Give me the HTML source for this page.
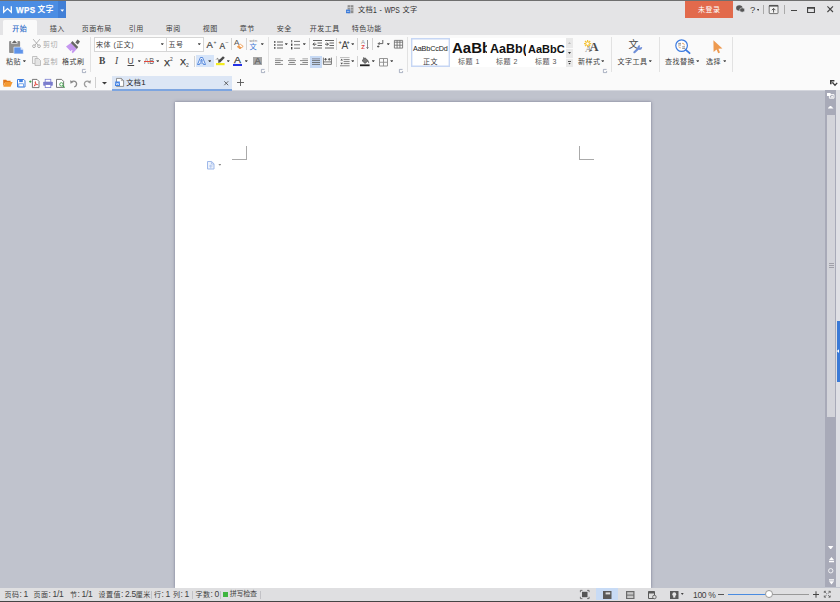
<!DOCTYPE html>
<html lang="zh-CN"><head><meta charset="utf-8"><title>文档1 - WPS 文字</title>
<style>
*{box-sizing:border-box;margin:0;padding:0}
html,body{width:840px;height:602px;overflow:hidden;background:#e4e4e6}
body{position:relative;font-family:"Liberation Sans","Noto Sans CJK SC",sans-serif;font-size:7px;letter-spacing:0.5px;color:#404040;line-height:10px}
.a{position:absolute}
.t{position:absolute;white-space:nowrap;line-height:10px;height:10px}
.g{color:#aaa}
.sep{position:absolute;width:1px;background:#e2e2e2}
.arr{position:absolute;width:0;height:0;border-left:1.9px solid transparent;border-right:1.9px solid transparent;border-top:2.4px solid #383838}
.l{font-size:8.5px;letter-spacing:-0.35px}
svg{position:absolute;overflow:visible}
</style></head><body>
<!-- title bar -->
<div class="a" style="left:0;top:0;width:840px;height:1px;background:#6f6f6f"></div>
<div class="a" style="left:0;top:1px;width:840px;height:17px;background:#e4e4e6"></div>
<div class="a" id="wpsbtn" style="left:0;top:1px;width:66px;height:17px;background:#4b8de3"></div>
<div class="a" style="left:58px;top:1px;width:8px;height:17px;background:#417fd6"></div>
<svg style="left:3px;top:6px" width="9" height="7" viewBox="0 0 9 7"><path d="M0.7 0.3V6.3L4.5 2.6L8.3 6.3V0.3" fill="none" stroke="#fff" stroke-width="1.3"/></svg>
<div class="t" style="left:16px;top:5px;color:#fff;font-size:9.5px;font-weight:bold;-webkit-text-stroke:0.25px #fff;transform:scaleX(.85);transform-origin:0 50%">WPS</div><div class="t" style="left:37.5px;top:5px;color:#fff;font-size:7.7px;font-weight:bold">文字</div>
<div class="a" style="left:60.4px;top:9.4px;width:3.8px;height:2.3px;background:#fff;clip-path:polygon(0 0,100% 0,50% 100%)"></div>
<svg style="left:346px;top:5px" width="8" height="8.5" viewBox="0 0 8 8.5"><path d="M1.6 0.2H7.4V8.2H1.6Z" fill="#8d8d8d"/><path d="M4.4 0.2V8.2M1.6 2.6H7.4M1.6 5H7.4" stroke="#e4e4e6" stroke-width="0.6"/><rect x="0" y="4.6" width="4.2" height="3.6" fill="#3d7bd8"/><path d="M0.8 6.4H3.4" stroke="#e8f0fc" stroke-width="0.6"/></svg>
<div class="t" id="title" style="left:358px;top:4.8px;font-size:7.2px;letter-spacing:0.3px;color:#333">文档</div><div class="t" style="left:373.4px;top:4.6px;font-size:8.6px;letter-spacing:0;word-spacing:1px;color:#333;transform:scaleX(.79);transform-origin:0 50%">1 - WPS</div><div class="t" style="left:402.5px;top:4.8px;font-size:7.2px;letter-spacing:0.3px;color:#333">文字</div>
<div class="a" style="left:685px;top:1px;width:48px;height:17px;background:#e26a4c"></div>
<div class="t" style="left:698px;top:4.9px;color:#fff">未登录</div>
<!-- window icons -->
<svg style="left:736px;top:5px" width="9" height="8" viewBox="0 0 9 8"><ellipse cx="3.3" cy="3" rx="3.2" ry="2.8" fill="#555"/><ellipse cx="6.2" cy="5" rx="2.6" ry="2.2" fill="#555" stroke="#e3e4e8" stroke-width="0.6"/></svg>
<div class="t" style="left:750px;top:4.7px;font-size:9.5px;color:#444">?</div>
<div class="a" style="left:756.8px;top:9px;width:2.7px;height:1.9px;background:#3a3a3a;clip-path:polygon(0 0,100% 0,50% 100%)"></div>
<div class="sep" style="left:762.8px;top:5px;height:9px;background:#aaa"></div>
<svg style="left:769px;top:5px" width="9" height="9" viewBox="0 0 9 9"><rect x="0.2" y="0.4" width="8.8" height="8.2" rx="0.6" fill="#f2f2f2" stroke="#555" stroke-width="0.8"/><rect x="0" y="0" width="9.2" height="1.6" fill="#555"/><path d="M4.6 7.6V3.6M2.8 5.2L4.6 3.4L6.4 5.2" fill="none" stroke="#444" stroke-width="0.9"/></svg>
<div class="sep" style="left:783.6px;top:5px;height:9px;background:#aaa"></div>
<div class="a" style="left:790.6px;top:9.6px;width:6.6px;height:1.2px;background:#444"></div>
<div class="a" style="left:807.3px;top:6.8px;width:7.6px;height:6px;box-shadow:inset 0 0 0 1.1px #444,inset 0 1.7px 0 0 #444"></div>
<svg style="left:826.6px;top:6.4px" width="6.4" height="6.4" viewBox="0 0 6.4 6.4"><path d="M0.4 0.4L6 6M6 0.4L0.4 6" stroke="#444" stroke-width="1.1"/></svg>

<!-- tab row -->
<div class="a" style="left:0;top:18px;width:840px;height:17px;background:#e4e4e6"></div>
<div class="a" style="left:2.6px;top:20px;width:34.6px;height:15px;background:#fafafa;border-radius:1.5px 1.5px 0 0"></div>
<div class="t" style="left:12.2px;top:23.6px;color:#2d6bc8;-webkit-text-stroke:0.15px #2d6bc8">开始</div>
<div class="t" style="left:49.8px;top:23.6px">插入</div>
<div class="t" style="left:81.8px;top:23.6px">页面布局</div>
<div class="t" style="left:128.8px;top:23.6px">引用</div>
<div class="t" style="left:165.8px;top:23.6px">审阅</div>
<div class="t" style="left:202.8px;top:23.6px">视图</div>
<div class="t" style="left:239.8px;top:23.6px">章节</div>
<div class="t" style="left:276.8px;top:23.6px">安全</div>
<div class="t" style="left:309.8px;top:23.6px">开发工具</div>
<div class="t" style="left:351.8px;top:23.6px">特色功能</div>

<!-- ribbon -->
<div class="a" id="ribbon" style="left:0;top:34.6px;width:840px;height:55.4px;background:#fafafa"></div>
<!-- clipboard group -->
<svg style="left:9px;top:40px" width="15" height="15" viewBox="0 0 15 15">
<rect x="0.1" y="1.1" width="11" height="11.9" rx="0.8" fill="#8f8f8f"/>
<rect x="2.2" y="0.9" width="6.3" height="2.7" fill="#fafafa"/>
<path d="M2.9 2.9H8L6.5 1.3Q5.45 -0.3 4.4 1.3Z" fill="#666"/>
<path d="M4.9 7.1H11.6L14.3 9.8V13.9H4.9Z" fill="#5e93ea" stroke="#fafafa" stroke-width="0.6"/>
<path d="M11.6 7.1V9.8H14.3Z" fill="#dfe9fb"/>
</svg>
<div class="t" style="left:6px;top:57px">粘贴</div>
<div class="a" style="left:22.8px;top:60.3px;width:3.2px;height:2.1px;background:#444;clip-path:polygon(0 0,100% 0,50% 100%)"></div>
<svg style="left:32px;top:39px" width="9" height="9" viewBox="0 0 9 9"><path d="M1.2 0.2L6.2 6.3M7.8 0.2L2.8 6.3" stroke="#a8a8a8" stroke-width="0.9" fill="none"/><circle cx="2" cy="7.2" r="1.4" fill="none" stroke="#a8a8a8" stroke-width="0.9"/><circle cx="7" cy="7.2" r="1.4" fill="none" stroke="#a8a8a8" stroke-width="0.9"/></svg>
<div class="t g" style="left:43px;top:40px">剪切</div>
<svg style="left:32px;top:56px" width="9" height="10" viewBox="0 0 9 10"><path d="M0.5 0.5H5V7.5H0.5Z" fill="#f2f2f2" stroke="#b5b5b5" stroke-width="0.8"/><path d="M3 2.5H6.5L8.5 4.5V9.5H3Z" fill="#e4e4e4" stroke="#b5b5b5" stroke-width="0.8"/></svg>
<div class="t g" style="left:43px;top:57px">复制</div>
<svg style="left:66px;top:39px" width="15" height="15" viewBox="0 0 15 15">
<path d="M0 7.4L4.8 3.9L10.8 10L6.8 14.2L5.6 13L6.6 11.6L5.8 11L4.6 12.2Z" fill="#c597f0"/>
<path d="M4.8 3.9L6.4 2.1L12.2 7.9L10.8 10Z" fill="#666"/>
<path d="M9.3 3.4L11.5 0.5L14 2.5L11.9 5.6Z" fill="#666"/>
</svg>
<div class="t" style="left:62px;top:57px">格式刷</div>
<svg class="lau" style="left:82px;top:69.2px" width="4" height="4" viewBox="0 0 4 4"><path d="M3.6 0.4H0.4V3.6H3.6V2" fill="none" stroke="#8c96ad" stroke-width="0.7"/></svg>
<div class="sep" style="left:90px;top:37px;height:35px"></div>

<!-- font group -->
<div class="a" style="left:93.5px;top:37px;width:73px;height:15px;background:#fff;border:1px solid #d6d6d6"></div>
<div class="a" style="left:165.5px;top:37px;width:38.5px;height:15px;background:#fff;border:1px solid #d6d6d6"></div>
<div class="t" style="left:96px;top:40px">宋体 (正文)</div>
<div class="a" style="left:160.7px;top:43.3px;width:3.2px;height:2.1px;background:#444;clip-path:polygon(0 0,100% 0,50% 100%)"></div>
<div class="t" style="left:168.5px;top:40px">五号</div>
<div class="a" style="left:197.7px;top:43.3px;width:3.2px;height:2.1px;background:#444;clip-path:polygon(0 0,100% 0,50% 100%)"></div>
<div class="t" style="left:206.5px;top:40px;font-size:9.5px;color:#3c3c3c;-webkit-text-stroke:0.2px #3c3c3c">A</div>
<div class="t" style="left:213.5px;top:36.5px;font-size:5px;color:#444">+</div>
<div class="t" style="left:219.5px;top:40.5px;font-size:8.5px;color:#3c3c3c;-webkit-text-stroke:0.2px #3c3c3c">A</div>
<div class="t" style="left:225.5px;top:36.5px;font-size:5px;color:#444">–</div>
<div class="sep" style="left:230.5px;top:38px;height:12px;background:#d3d3d3"></div>
<div class="t" style="left:234px;top:38px;font-size:8px;color:#555">A</div>
<svg style="left:237px;top:43.5px" width="6.5" height="5" viewBox="0 0 6.5 5"><path d="M0.3 2.8L3.4 0.3L6.2 2.4L3 4.8Z" fill="#fff" stroke="#ee9a4d" stroke-width="0.9"/><path d="M0.3 2.8L1.8 1.6L4.6 3.6L3 4.8Z" fill="#ee9a4d"/></svg>
<div class="sep" style="left:245.5px;top:38px;height:12px;background:#d3d3d3"></div>
<div class="t" style="left:249.5px;top:41.5px;font-size:7.2px;color:#3e78d6">文</div>
<div class="t" style="left:249.5px;top:35.5px;font-size:4px;color:#777;letter-spacing:0.2px">wén</div>
<div class="a" style="left:260.7px;top:43.3px;width:3.2px;height:2.1px;background:#444;clip-path:polygon(0 0,100% 0,50% 100%)"></div>

<div class="t" style="left:99px;top:56px;font-family:'Liberation Serif',serif;font-weight:bold;font-size:9.5px;color:#444">B</div>
<div class="t" style="left:115px;top:56px;font-family:'Liberation Serif',serif;font-style:italic;font-size:9.5px;color:#444">I</div>
<div class="t" style="left:127.5px;top:55.5px;font-size:8.5px;color:#444;text-decoration:underline;text-decoration-thickness:0.7px;text-underline-offset:0.6px">U</div>
<div class="a" style="left:137.7px;top:60.3px;width:3.2px;height:2.1px;background:#444;clip-path:polygon(0 0,100% 0,50% 100%)"></div>
<div class="t" style="left:144px;top:56.3px;font-size:9px;color:#6a6a6a;transform:scaleX(.8);transform-origin:0 50%">AB</div>
<div class="a" style="left:143.5px;top:60.5px;width:10.5px;height:1px;background:#e0473e"></div>
<div class="a" style="left:156.2px;top:60.3px;width:3.2px;height:2.1px;background:#444;clip-path:polygon(0 0,100% 0,50% 100%)"></div>
<div class="t" style="left:164px;top:57.5px;font-size:9px;color:#333;-webkit-text-stroke:0.25px #333">X</div>
<div class="t" style="left:170px;top:53.5px;font-size:5px;color:#444">2</div>
<div class="t" style="left:180px;top:57px;font-size:9px;color:#333;-webkit-text-stroke:0.25px #333">X</div>
<div class="t" style="left:186px;top:60px;font-size:5px;color:#444">2</div>
<div class="sep" style="left:194px;top:56px;height:11px;background:#d3d3d3"></div>
<div class="a" style="left:196.2px;top:55px;width:17.6px;height:11.8px;background:#d6e4f8"></div>
<svg style="left:197.3px;top:56.8px" width="9" height="8" viewBox="0 0 9 8"><path d="M0.5 7.5L3.4 0.5H5.6L8.5 7.5H6.5L5.9 5.9H3.1L2.5 7.5Z M3.6 4.3H5.4L4.5 2Z" fill="#f4f8fe" stroke="#3f78d8" stroke-width="0.85" stroke-linejoin="round"/></svg>
<div class="a" style="left:208.2px;top:60.3px;width:3.2px;height:2.1px;background:#444;clip-path:polygon(0 0,100% 0,50% 100%)"></div>
<svg style="left:215.5px;top:56px" width="9" height="10" viewBox="0 0 9 10"><rect x="0" y="7" width="8.6" height="2.2" fill="#f3ec1f"/><path d="M7 0.2L8.8 1.8L4.2 6.4L2 6.8L2.6 4.6Z" fill="#4a4a4a"/><path d="M0.2 3.4C1.2 2 2.4 2.2 2.1 3.6C1.9 4.8 3 4.6 3.8 3.6" stroke="#555" stroke-width="0.8" fill="none"/></svg>
<div class="a" style="left:226.7px;top:60.3px;width:3.2px;height:2.1px;background:#444;clip-path:polygon(0 0,100% 0,50% 100%)"></div>
<div class="t" style="left:233.6px;top:54.6px;font-size:9.5px;color:#3c3c3c;-webkit-text-stroke:0.25px #3c3c3c;transform:scaleX(1.1);transform-origin:0 50%">A</div>
<div class="a" style="left:233px;top:63.5px;width:9px;height:2px;background:#2432e6"></div>
<div class="a" style="left:244.7px;top:60.3px;width:3.2px;height:2.1px;background:#444;clip-path:polygon(0 0,100% 0,50% 100%)"></div>
<div class="a" style="left:253.3px;top:57px;width:8.8px;height:8.3px;background:#a6a6a6"></div>
<div class="t" style="left:254.4px;top:56.4px;font-size:9.5px;color:#646464;-webkit-text-stroke:0.2px #646464">A</div>
<svg class="lau" style="left:260.5px;top:69.2px" width="4" height="4" viewBox="0 0 4 4"><path d="M3.6 0.4H0.4V3.6H3.6V2" fill="none" stroke="#8c96ad" stroke-width="0.7"/></svg>
<div class="sep" style="left:268px;top:37px;height:35px"></div>
<!-- paragraph group -->
<svg style="left:273.5px;top:40.5px" width="9" height="8" viewBox="0 0 9 8"><g fill="#444"><rect x="0" y="0.2" width="1.5" height="1.5"/><rect x="0" y="3.2" width="1.5" height="1.5"/><rect x="0" y="6.2" width="1.5" height="1.5"/></g><g stroke="#555" stroke-width="0.9"><path d="M3 1H9M3 4H9M3 7H9"/></g></svg>
<div class="a" style="left:284.7px;top:43.3px;width:3.2px;height:2.1px;background:#444;clip-path:polygon(0 0,100% 0,50% 100%)"></div>
<svg style="left:291px;top:39.5px" width="9" height="10" viewBox="0 0 9 10"><g fill="#444"><rect x="0.3" y="0" width="0.9" height="2.4"/><rect x="0" y="3.6" width="1.4" height="2.2"/><rect x="0" y="7" width="1.4" height="2.4"/></g><g stroke="#666" stroke-width="0.9"><path d="M3 1.4H9M3 4.8H9M3 8.2H9"/></g></svg>
<div class="a" style="left:302.7px;top:43.3px;width:3.2px;height:2.1px;background:#444;clip-path:polygon(0 0,100% 0,50% 100%)"></div>
<div class="sep" style="left:309px;top:38px;height:12px;background:#d3d3d3"></div>
<svg style="left:313px;top:40px" width="9" height="8.5" viewBox="0 0 9 8.5"><g stroke="#555" stroke-width="0.9"><path d="M0 0.5H9M4.5 3H9M4.5 5.5H9M0 8H9"/></g><path d="M0 4.2H3.4M1.6 2.6L0 4.2L1.6 5.8" stroke="#444" stroke-width="0.9" fill="none"/></svg>
<svg style="left:325px;top:40px" width="9" height="8.5" viewBox="0 0 9 8.5"><g stroke="#555" stroke-width="0.9"><path d="M0 0.5H9M4.5 3H9M4.5 5.5H9M0 8H9"/></g><path d="M0 4.2H3.4M1.8 2.6L3.4 4.2L1.8 5.8" stroke="#444" stroke-width="0.9" fill="none"/></svg>
<div class="sep" style="left:336px;top:38px;height:12px;background:#d3d3d3"></div>
<div class="t" style="left:341.5px;top:40.5px;font-size:10px;color:#444">A</div>
<div class="t" style="left:338.5px;top:37px;font-size:5.5px;color:#444;font-weight:bold">+</div>
<div class="t" style="left:346.5px;top:37px;font-size:5.5px;color:#444;font-weight:bold">+</div>
<div class="a" style="left:351.2px;top:43.3px;width:3.2px;height:2.1px;background:#444;clip-path:polygon(0 0,100% 0,50% 100%)"></div>
<div class="sep" style="left:357px;top:38px;height:12px;background:#d3d3d3"></div>
<div class="t" style="left:361px;top:37px;font-size:6px;color:#999">A</div>
<div class="t" style="left:361.2px;top:42.2px;font-size:6px;color:#e04848;font-weight:bold">Z</div>
<svg style="left:366.4px;top:40px" width="3" height="9" viewBox="0 0 3 9"><path d="M1.5 0V8.6M0.5 7.2L1.5 8.6L2.5 7.2" stroke="#666" stroke-width="0.75" fill="none"/></svg>
<div class="sep" style="left:371.5px;top:38px;height:12px;background:#d3d3d3"></div>
<svg style="left:377px;top:40px" width="7" height="8" viewBox="0 0 7 8"><path d="M5.8 0V3.6H1.2M2.6 2.2L1.2 3.6L2.6 5" stroke="#555" stroke-width="0.9" fill="none"/><path d="M0 6.5H2.4M1.2 5.4V7.6" stroke="#444" stroke-width="0.8"/></svg>
<div class="a" style="left:386.7px;top:43.3px;width:3.2px;height:2.1px;background:#444;clip-path:polygon(0 0,100% 0,50% 100%)"></div>
<svg style="left:394px;top:40px" width="9" height="8.5" viewBox="0 0 9 8.5"><path d="M0.4 0.4H8.6V8.1H0.4ZM0.4 2.2H8.6M0.4 5.2H8.6M3.1 0.4V8.1M5.9 0.4V8.1" fill="none" stroke="#666" stroke-width="0.8"/></svg>

<svg style="left:275px;top:58px" width="8" height="7" viewBox="0 0 8 7"><path d="M0 0.8H5.6" stroke="#bdbdbd" stroke-width="1.4"/><path d="M0 2.6H8M0 4.5H5.6M0 6.4H8" stroke="#6a6a6a" stroke-width="0.8"/></svg>
<svg style="left:287.5px;top:58px" width="8" height="7" viewBox="0 0 8 7"><path d="M1.2 0.8H6.8" stroke="#bdbdbd" stroke-width="1.4"/><path d="M0 2.6H8M1.2 4.5H6.8M0 6.4H8" stroke="#6a6a6a" stroke-width="0.8"/></svg>
<svg style="left:300px;top:58px" width="8" height="7" viewBox="0 0 8 7"><path d="M2.4 0.8H8" stroke="#bdbdbd" stroke-width="1.4"/><path d="M0 2.6H8M2.4 4.5H8M0 6.4H8" stroke="#6a6a6a" stroke-width="0.8"/></svg>
<div class="a" style="left:310px;top:55.7px;width:11.9px;height:12.3px;background:#c7daf5"></div>
<svg style="left:312px;top:58px" width="8" height="7" viewBox="0 0 8 7"><path d="M0 0.8H8" stroke="#9aa3b5" stroke-width="1.4"/><path d="M0 2.6H8M0 4.5H8M0 6.4H8" stroke="#5a5a5a" stroke-width="0.8"/></svg>
<svg style="left:323.3px;top:57.4px" width="8.8" height="8" viewBox="0 0 8.8 8"><path d="M0.4 0.6V7.4H8.4V0.6M0.4 4.9H8.4" fill="none" stroke="#555" stroke-width="0.8"/><path d="M1.2 2.3H3.9M2.55 1V3.6M4.9 2.3H7.6M6.25 1V3.6" stroke="#444" stroke-width="0.8"/></svg>
<div class="sep" style="left:336px;top:56px;height:11px;background:#d3d3d3"></div>
<svg style="left:340px;top:56.8px" width="9.6" height="9.4" viewBox="0 0 9.6 9.4"><path d="M0 0.6H9.6" stroke="#bbb" stroke-width="1"/><path d="M3.6 2.6H9.6M3.6 4.6H9.6M3.6 6.6H9.6M0 8.8H9.6" stroke="#666" stroke-width="0.8"/><path d="M0.4 3.4L1.7 1.8L3 3.4ZM0.4 5.8L1.7 7.4L3 5.8Z" fill="#444"/></svg>
<div class="a" style="left:351.2px;top:60.3px;width:3.2px;height:2.1px;background:#444;clip-path:polygon(0 0,100% 0,50% 100%)"></div>
<div class="sep" style="left:357px;top:56px;height:11px;background:#d3d3d3"></div>
<svg style="left:360px;top:56.5px" width="10" height="9.5" viewBox="0 0 10 9.5"><rect x="0" y="7.4" width="9.6" height="1.8" fill="#222"/><path d="M2 3.6L5 0.8L8.2 3.8L5 6.4Z" fill="#777" stroke="#444" stroke-width="0.7"/><path d="M3.6 2V0.2" stroke="#444" stroke-width="0.7"/><path d="M8.2 3.8C9 4.6 9.4 5.4 9 6.2C8.4 6.4 8 5.6 8.2 3.8Z" fill="#555"/></svg>
<div class="a" style="left:371.7px;top:60.3px;width:3.2px;height:2.1px;background:#444;clip-path:polygon(0 0,100% 0,50% 100%)"></div>
<svg style="left:378.5px;top:57.5px" width="9" height="8.5" viewBox="0 0 9 8.5"><path d="M0.5 0.5H8.5V8H0.5ZM4.5 0.5V8M0.5 4.25H8.5" fill="none" stroke="#8a8a8a" stroke-width="0.9"/></svg>
<div class="a" style="left:390.2px;top:60.3px;width:3.2px;height:2.1px;background:#444;clip-path:polygon(0 0,100% 0,50% 100%)"></div>
<svg class="lau" style="left:399px;top:69.2px" width="4" height="4" viewBox="0 0 4 4"><path d="M3.6 0.4H0.4V3.6H3.6V2" fill="none" stroke="#8c96ad" stroke-width="0.7"/></svg>
<div class="sep" style="left:406.8px;top:37px;height:35px"></div>

<!-- styles gallery -->
<div class="a" style="left:411px;top:37.6px;width:155px;height:29.7px;background:#fff"></div>
<div class="a" style="left:411px;top:37.6px;width:38.5px;height:29.7px;box-shadow:inset 0 0 0 1.4px #c6d6f4"></div>
<div class="t" style="left:413px;top:43.5px;font-size:7.2px;color:#222;letter-spacing:-0.1px">AaBbCcDd</div>
<div class="t" style="left:423px;top:57px">正文</div>
<div class="a" style="left:450px;top:38px;width:37px;height:18px;overflow:hidden"><div class="t" style="left:2px;top:3px;font-size:15px;font-weight:bold;letter-spacing:0;color:#111;line-height:14px;height:14px">AaBb</div></div>
<div class="t" style="left:458px;top:57px;color:#555">标题 1</div>
<div class="a" style="left:488px;top:38px;width:38px;height:18px;overflow:hidden"><div class="t" style="left:2px;top:3.5px;font-size:12.5px;font-weight:bold;letter-spacing:0;color:#111;line-height:14px;height:14px">AaBb(</div></div>
<div class="t" style="left:496px;top:57px;color:#555">标题 2</div>
<div class="a" style="left:526.5px;top:38px;width:38px;height:18px;overflow:hidden"><div class="t" style="left:1.5px;top:4px;font-size:11px;font-weight:bold;letter-spacing:0;color:#111;line-height:14px;height:14px">AaBbC</div></div>
<div class="t" style="left:535px;top:57px;color:#555">标题 3</div>
<div class="a" style="left:566px;top:37.6px;width:7px;height:29.7px;background:#e9e9e9"></div>
<div class="a" style="left:566px;top:47.5px;width:7px;height:1px;background:#fafafa"></div>
<div class="a" style="left:566px;top:57.5px;width:7px;height:1px;background:#fafafa"></div>
<div class="a" style="left:568px;top:42px;width:3px;height:2px;background:#bbb;clip-path:polygon(50% 0,100% 100%,0 100%)"></div>
<div class="a" style="left:568px;top:52px;width:3px;height:2px;background:#3a3a3a;clip-path:polygon(0 0,100% 0,50% 100%)"></div>
<div class="a" style="left:568px;top:60.5px;width:3px;height:0.8px;background:#555"></div>
<div class="a" style="left:568px;top:62.5px;width:3px;height:2px;background:#3a3a3a;clip-path:polygon(0 0,100% 0,50% 100%)"></div>

<!-- new style -->
<svg style="left:583px;top:39px" width="16" height="14" viewBox="0 0 16 14"><g stroke="#f4c232" stroke-width="1.2"><path d="M4.6 1V8.2M1 4.6H8.2M2 2L7.2 7.2M7.2 2L2 7.2"/></g><circle cx="4.6" cy="4.6" r="1.7" fill="#fff" stroke="#f4c232" stroke-width="0.7"/></svg>
<div class="t" style="left:585.5px;top:43.5px;font-family:'Liberation Serif',serif;font-size:8.5px;color:#888;font-style:italic">A</div>
<div class="t" style="left:589.5px;top:40.5px;font-family:'Liberation Serif',serif;font-size:12.5px;font-weight:bold;color:#4a4a4a;line-height:12px;height:12px">A</div>
<div class="t" style="left:578px;top:57px">新样式</div>
<div class="a" style="left:601.2px;top:60.3px;width:3.2px;height:2.1px;background:#444;clip-path:polygon(0 0,100% 0,50% 100%)"></div>
<svg class="lau" style="left:603px;top:69.2px" width="4" height="4" viewBox="0 0 4 4"><path d="M3.6 0.4H0.4V3.6H3.6V2" fill="none" stroke="#8c96ad" stroke-width="0.7"/></svg>
<div class="sep" style="left:611px;top:37px;height:35px"></div>
<!-- text tools -->
<div class="t" style="left:628.6px;top:38.7px;font-size:10px;color:#4a4a4a;line-height:12px;height:12px">文</div>
<svg style="left:633px;top:44.5px" width="10" height="8.5" viewBox="0 0 10 8.5"><path d="M1.4 7.2L5.6 3.2" stroke="#6f8fd8" stroke-width="2.2" stroke-linecap="round"/><circle cx="6.8" cy="2.6" r="2.3" fill="#6f8fd8"/><path d="M6.6 2.8L7.2 -0.4L10.2 1.6Z" fill="#fafafa"/></svg>
<div class="t" style="left:617.5px;top:57px">文字工具</div>
<div class="a" style="left:648.7px;top:60.3px;width:3.2px;height:2.1px;background:#444;clip-path:polygon(0 0,100% 0,50% 100%)"></div>
<div class="sep" style="left:658.5px;top:37px;height:35px"></div>
<!-- find replace -->
<svg style="left:674.5px;top:39px" width="16" height="15" viewBox="0 0 16 15"><circle cx="6.6" cy="6.6" r="5.8" fill="#fff" stroke="#3c7be0" stroke-width="1.2"/><path d="M10.8 10.8L14.6 14.2" stroke="#3c7be0" stroke-width="1.8" stroke-linecap="round"/><g stroke="#777" stroke-width="0.8"><path d="M3.2 4.4H6M3.2 6H6"/><path d="M7.2 7.8H10M7.2 9.4H10"/></g><path d="M7 4.4C8.6 4 9.4 4.8 9.2 6.4M5.8 8.8C4.4 9 3.8 8.4 3.8 7.4" fill="none" stroke="#e89a4a" stroke-width="0.8"/></svg>
<div class="t" style="left:665px;top:57px">查找替换</div>
<div class="a" style="left:696.2px;top:60.3px;width:3.2px;height:2.1px;background:#444;clip-path:polygon(0 0,100% 0,50% 100%)"></div>
<svg style="left:713px;top:40px" width="10" height="13.5" viewBox="0 0 10 13.5"><path d="M0.4 0.2L9.4 8.6L5.4 8.8L7 12.6L5.2 13.2L3.6 9.6L0.6 12Z" fill="#ee9a50"/></svg>
<div class="t" style="left:706px;top:57px">选择</div>
<div class="a" style="left:723.2px;top:60.3px;width:3.2px;height:2.1px;background:#444;clip-path:polygon(0 0,100% 0,50% 100%)"></div>
<div class="sep" style="left:732px;top:37px;height:35px"></div>
<!-- QAT row -->
<svg style="left:3px;top:79px" width="10" height="8" viewBox="0 0 10 8"><path d="M0.2 7.6V0.8H3.2L4 1.8H7.6V3H2.2Z" fill="#e0771a"/><path d="M0.4 7.8L2.2 3H9.6L7.6 7.8Z" fill="#f59a32"/></svg>
<svg style="left:17px;top:78.5px" width="8.5" height="8.5" viewBox="0 0 8.5 8.5"><path d="M0.5 0.5H6.8L8 1.8V8H0.5Z" fill="#fff" stroke="#3f7fe0" stroke-width="1"/><rect x="2.2" y="0.5" width="3.6" height="2.6" fill="#3f7fe0"/><rect x="1.8" y="4.8" width="4.8" height="3" fill="#fff" stroke="#3f7fe0" stroke-width="0.7"/></svg>
<svg style="left:29px;top:78.5px" width="10.5" height="9" viewBox="0 0 10.5 9"><path d="M3.4 0.4H8L10 2.4V8.6H3.4Z" fill="#fff" stroke="#555" stroke-width="0.8"/><path d="M5.2 7.2C6.4 5 6.8 3.4 6.4 2.6C5.6 3.2 6.6 5.4 8.6 5.6C7 5.4 5.6 6.2 5.2 7.2Z" fill="none" stroke="#e0352b" stroke-width="0.8"/><path d="M0.2 2.6H2.4M1.3 1.5V3.7" stroke="#3aa046" stroke-width="1"/></svg>
<svg style="left:42.5px;top:78.5px" width="10" height="9" viewBox="0 0 10 9"><rect x="2.2" y="0.3" width="5.6" height="3" fill="#fff" stroke="#7a7ccd" stroke-width="0.8"/><rect x="0.2" y="2.8" width="9.6" height="4" rx="0.8" fill="#7a7ccd"/><rect x="2.2" y="5.6" width="5.6" height="3" fill="#fff" stroke="#7a7ccd" stroke-width="0.8"/></svg>
<svg style="left:56px;top:78.5px" width="9.5" height="9" viewBox="0 0 9.5 9"><path d="M0.5 0.4H5.6L7.6 2.4V8.4H0.5Z" fill="#fff" stroke="#555" stroke-width="0.8"/><circle cx="5.4" cy="5.4" r="1.7" fill="#fff" stroke="#3aa046" stroke-width="0.9"/><path d="M6.6 6.6L8.6 8.6" stroke="#3aa046" stroke-width="1.1"/></svg>
<svg style="left:70px;top:78.5px" width="8" height="8.5" viewBox="0 0 8 8.5"><path d="M1.4 2.6C4 1.4 6.6 2.4 6.6 4.8C6.6 6.6 5.6 7.6 4.2 8" fill="none" stroke="#8a8a8a" stroke-width="1.3"/><path d="M0 1.2L0.6 4.8L3.6 3Z" fill="#8a8a8a"/></svg>
<svg style="left:83px;top:78.5px" width="8" height="8.5" viewBox="0 0 8 8.5"><path d="M6.6 2.6C4 1.4 1.4 2.4 1.4 4.8C1.4 6.6 2.4 7.6 3.8 8" fill="none" stroke="#9c9c9c" stroke-width="1.3"/><path d="M8 1.2L7.4 4.8L4.4 3Z" fill="#9c9c9c"/></svg>
<div class="sep" style="left:95px;top:77px;height:11px;background:#d0d0d0"></div>
<div class="a" style="left:101.5px;top:81.5px;width:6px;height:3px;background:#3a3a3a;clip-path:polygon(0 0,100% 0,50% 100%)"></div>
<div class="a" style="left:112px;top:75.6px;width:120px;height:14px;background:#dce6f5"></div><div class="a" style="left:112px;top:89.1px;width:120px;height:1.7px;background:#7da5e0;z-index:2"></div>
<svg style="left:115px;top:78px" width="9" height="8.8" viewBox="0 0 9 8.8"><path d="M1.5 0.4H6.4L8.6 2.6V8.4H1.5Z" fill="#fff" stroke="#7a7a7a" stroke-width="0.8"/><path d="M6.4 0.4V2.6H8.6" fill="none" stroke="#7a7a7a" stroke-width="0.6"/><rect x="0" y="3.6" width="5" height="4.3" rx="0.5" fill="#3f80e4"/><path d="M0.9 4.6L1.7 7L2.5 5.2L3.3 7L4.1 4.6" stroke="#fff" stroke-width="0.6" fill="none"/></svg>
<div class="t" style="left:126.3px;top:77.6px;color:#222">文档<span class="l" style="font-size:8px">1</span></div>
<svg style="left:224px;top:81px" width="4.5" height="4.5" viewBox="0 0 4.5 4.5"><path d="M0.3 0.3L4.2 4.2M4.2 0.3L0.3 4.2" stroke="#444" stroke-width="0.8"/></svg>
<svg style="left:236.5px;top:79px" width="7" height="7" viewBox="0 0 7 7"><path d="M3.5 0V7M0 3.5H7" stroke="#555" stroke-width="0.9"/></svg>
<svg style="left:829.8px;top:79.8px" width="8" height="6.5" viewBox="0 0 8 6.5"><path d="M0 0H4.4V1.5H0Z M0 1.5H1.6V4.2H0Z M2 2.2H3.4V3.2H2Z" fill="#3a3a3a"/><path d="M2.8 2.9L5 5.2L7.2 2.9" stroke="#3a3a3a" stroke-width="1.3" fill="none"/></svg>


<!-- doc area -->
<div class="a" id="docbg" style="left:0;top:90.4px;width:840px;height:498px;background:#c0c3cd"></div>
<div class="a" style="left:0;top:89.6px;width:840px;height:1.2px;background:#d4d6dd"></div>
<div class="a" id="page" style="left:174.7px;top:102.2px;width:476.3px;height:486px;background:#fff;box-shadow:0 0 1px #9c9fb0,0 0 3px rgba(100,102,128,.75)"></div>
<div class="a" style="left:232px;top:159px;width:15px;height:0.9px;background:#aaa"></div>
<div class="a" style="left:246px;top:145.5px;width:0.9px;height:14.5px;background:#aaa"></div>
<div class="a" style="left:579px;top:159px;width:14.5px;height:0.9px;background:#aaa"></div>
<div class="a" style="left:579px;top:145.5px;width:0.9px;height:14.5px;background:#aaa"></div>
<svg style="left:207px;top:161px" width="7.5" height="8.5" viewBox="0 0 7.5 8.5"><path d="M0.5 0.5H4.6L7 2.8V8H0.5Z" fill="#eef3fc" stroke="#9fb9ea" stroke-width="1"/><path d="M4.4 0.6V3H7" fill="none" stroke="#9fb9ea" stroke-width="0.8"/><path d="M2 5H5.6M3.8 3.6V7.4" stroke="#9fb9ea" stroke-width="0.7"/></svg>
<div class="a" style="left:218.3px;top:164px;width:3.2px;height:1.8px;background:#8a8a8a;clip-path:polygon(0 0,100% 0,50% 100%)"></div>
<!-- scrollbar -->
<div class="a" style="left:825px;top:90px;width:11px;height:497px;background:#a8aab8"></div>
<div class="a" style="left:836px;top:90px;width:4px;height:497px;background:#dfe0e5"></div>
<div class="a" style="left:827px;top:114.5px;width:8px;height:302.5px;background:#d3d4da"></div>
<div class="a" style="left:829px;top:263px;width:4.5px;height:0.8px;background:#a0a0a8"></div>
<div class="a" style="left:829px;top:265px;width:4.5px;height:0.8px;background:#a0a0a8"></div>
<div class="a" style="left:829px;top:267px;width:4.5px;height:0.8px;background:#a0a0a8"></div>
<div class="a" style="left:836.5px;top:320.5px;width:3.5px;height:61.5px;background:#3b7ad6"></div>
<div class="a" style="left:836.8px;top:349.3px;width:2.2px;height:3.6px;background:#fff;clip-path:polygon(100% 0,100% 100%,0 50%)"></div>
<svg style="left:827px;top:93px" width="7.5" height="5.5" viewBox="0 0 7.5 5.5"><rect x="0" y="0" width="3.6" height="3" fill="#fff"/><path d="M2.4 1.6H7V5.2H2.4Z" fill="none" stroke="#fff" stroke-width="0.9"/><path d="M3.4 4.6L5.2 2.6L6.6 4.6Z" fill="#fff"/></svg>
<div class="a" style="left:827.5px;top:105.5px;width:6px;height:3px;background:#fff;clip-path:polygon(50% 0,100% 100%,0 100%)"></div>
<div class="a" style="left:827.8px;top:545.7px;width:5.8px;height:3.8px;background:#fff;clip-path:polygon(0 0,100% 0,50% 100%)"></div>
<svg style="left:828.5px;top:556.5px" width="5" height="5.5" viewBox="0 0 5 5.5"><path d="M0 3L2.5 0L5 3Z M0 3.8H5V5.2H0Z" fill="#fff"/></svg>
<svg style="left:828px;top:568px" width="5.5" height="5.5" viewBox="0 0 5.5 5.5"><circle cx="2.75" cy="2.75" r="2.2" fill="none" stroke="#fff" stroke-width="0.8"/></svg>
<svg style="left:828.5px;top:579px" width="5" height="5.5" viewBox="0 0 5 5.5"><path d="M0 0.2H5V1.5H0Z M0 2.2L2.5 5.4L5 2.2Z" fill="#fff"/></svg>


<!-- status bar -->
<div class="a" id="status" style="left:0;top:587.5px;width:840px;height:13.3px;background:#dfdfe1"></div>
<div class="a" style="left:0;top:600.7px;width:840px;height:2px;background:#454545"></div>
<div class="t" style="left:4.5px;top:589.4px">页码<span class="l">: 1</span></div>
<div class="t" style="left:33.5px;top:589.4px">页面<span class="l">: 1/1</span></div>
<div class="t" style="left:70px;top:589.4px">节<span class="l">: 1/1</span></div>
<div class="t" style="left:98.5px;top:589.4px">设置值<span class="l">: 2.5</span>厘米</div>
<div class="sep" style="left:150.5px;top:591px;height:7.5px;background:#c2c2c6"></div>
<div class="t" style="left:154px;top:589.4px">行<span class="l">: 1</span></div>
<div class="t" style="left:173px;top:589.4px">列<span class="l">: 1</span></div>
<div class="sep" style="left:191.5px;top:591px;height:7.5px;background:#c2c2c6"></div>
<div class="t" style="left:195.5px;top:589.4px">字数<span class="l">: 0</span></div>
<div class="sep" style="left:220px;top:591px;height:7.5px;background:#c2c2c6"></div>
<div class="a" style="left:223px;top:592px;width:4.5px;height:5px;background:#3fb53f"></div>
<div class="t" style="left:229.7px;top:589.4px;letter-spacing:-0.2px">拼写检查</div>
<div class="sep" style="left:260px;top:591px;height:7.5px;background:#c2c2c6"></div>
<svg style="left:580px;top:590px" width="9.5" height="9" viewBox="0 0 9.5 9"><rect x="2" y="1.8" width="5.5" height="5.4" fill="#555"/><path d="M0.4 2.2V0.4H2.4M7.1 0.4H9.1V2.2M9.1 6.8V8.6H7.1M2.4 8.6H0.4V6.8" fill="none" stroke="#555" stroke-width="0.8"/></svg>
<div class="a" style="left:596px;top:588px;width:22px;height:12px;background:#c8dbf5"></div>
<svg style="left:603px;top:590.5px" width="8.5" height="8" viewBox="0 0 8.5 8"><rect x="0" y="0" width="8.5" height="8" fill="#5a5a5a"/><rect x="2.6" y="1.4" width="4.6" height="2" fill="#ddd"/></svg>
<svg style="left:625.5px;top:590.5px" width="8.5" height="8" viewBox="0 0 8.5 8"><rect x="0" y="0" width="8.5" height="8" fill="#6a6a6a"/><rect x="1.2" y="1.2" width="6.1" height="2.4" fill="#c8c8c8"/><rect x="1.2" y="4.6" width="6.1" height="2.4" fill="#c8c8c8"/></svg>
<svg style="left:648px;top:590.5px" width="9" height="8.5" viewBox="0 0 9 8.5"><path d="M0.5 0.5H6.5V7.5H0.5Z" fill="#ddd" stroke="#5a5a5a" stroke-width="1"/><rect x="0.5" y="0.5" width="6" height="2" fill="#5a5a5a"/><circle cx="6.4" cy="6" r="1.8" fill="#ddd" stroke="#5a5a5a" stroke-width="0.8"/></svg>
<svg style="left:669.5px;top:590.5px" width="8.5" height="8" viewBox="0 0 8.5 8"><rect x="0" y="0" width="8.5" height="8" fill="#5a5a5a"/><circle cx="4.25" cy="3.2" r="1.9" fill="#e8e8e8"/><rect x="3.2" y="4.6" width="2.1" height="2" fill="#e8e8e8"/></svg>
<div class="a" style="left:680.7px;top:592.8px;width:3.2px;height:2.1px;background:#444;clip-path:polygon(0 0,100% 0,50% 100%)"></div>
<div class="t" style="left:693px;top:589.5px;font-size:8.5px;letter-spacing:-0.3px">100 %</div>
<div class="a" style="left:717.5px;top:593.5px;width:6px;height:1px;background:#555"></div>
<div class="a" style="left:728px;top:593.5px;width:38px;height:1.2px;background:#4a8be0"></div>
<div class="a" style="left:770px;top:593.5px;width:38.5px;height:1.2px;background:#999"></div>
<div class="a" style="left:764.5px;top:590px;width:8px;height:8px;border-radius:50%;background:#fff;border:0.8px solid #999"></div>
<svg style="left:812.5px;top:590.5px" width="6" height="7" viewBox="0 0 6 7"><path d="M3 0.3V6.7M0 3.5H6" stroke="#444" stroke-width="1"/></svg>
<svg style="left:824px;top:591px" width="6.5" height="6.5" viewBox="0 0 6.5 6.5"><path d="M0.4 0.4L6.1 6.1M6.1 0.4L0.4 6.1" stroke="#555" stroke-width="0.7"/><path d="M0.3 2V0.3H2M4.5 0.3H6.2V2M6.2 4.5V6.2H4.5M2 6.2H0.3V4.5" fill="none" stroke="#555" stroke-width="0.8"/><rect x="2.4" y="2.4" width="1.7" height="1.7" fill="#dddee3"/></svg>

</body></html>
